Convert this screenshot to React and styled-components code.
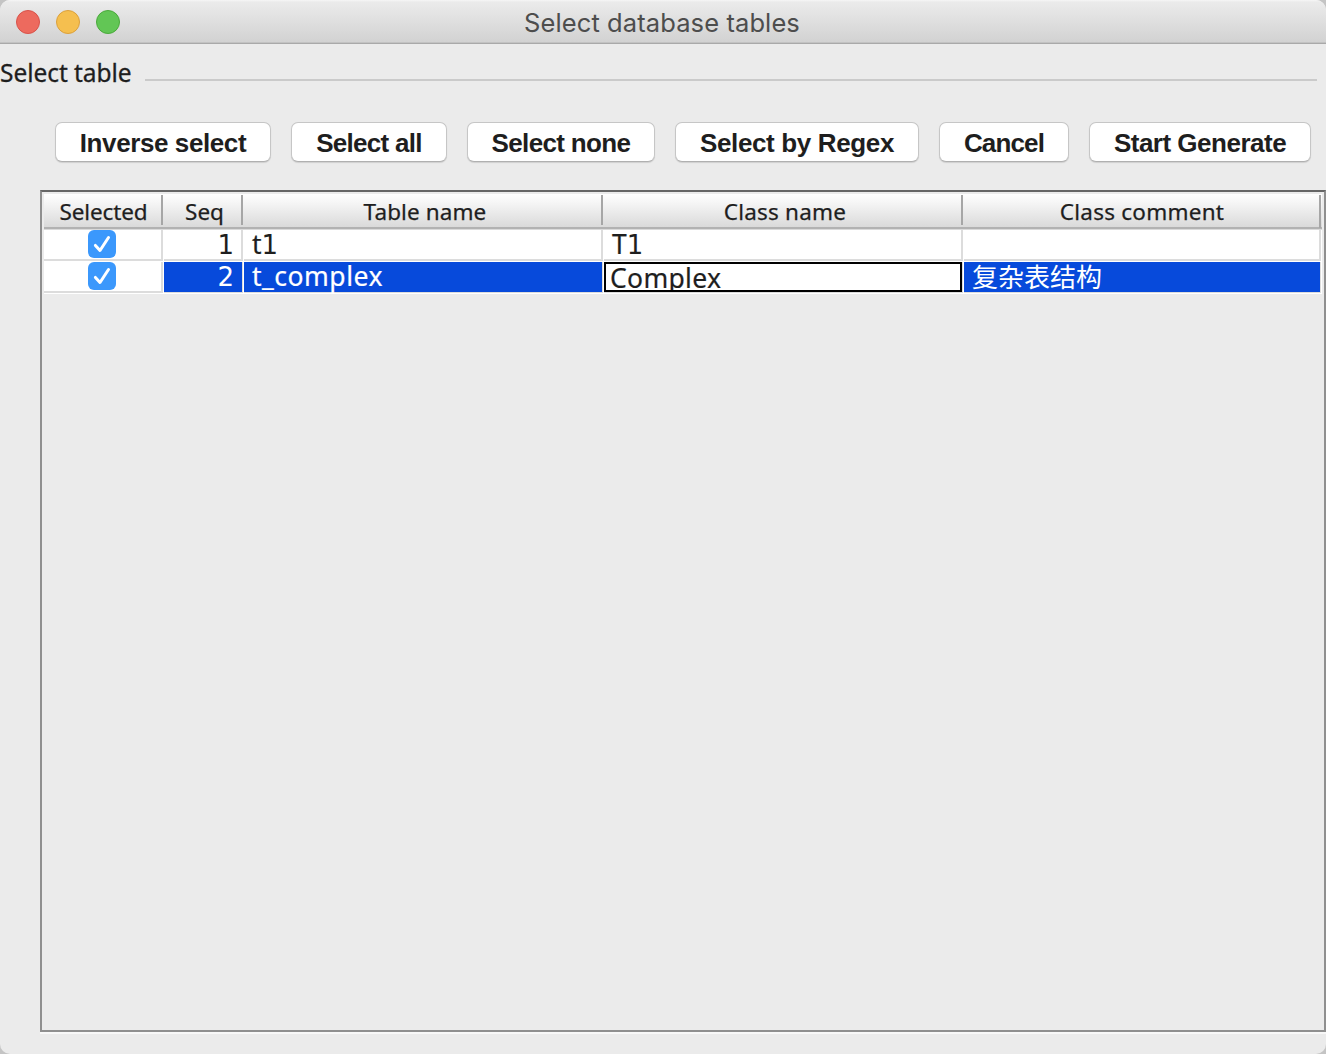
import React from "react";
import styled, { createGlobalStyle } from "styled-components";

const GlobalStyle = createGlobalStyle`
  * { box-sizing: border-box; }
  body { margin: 0; background: #c4c4c4; }
`;

const lucida = `"Lucida Grande", "Noto Sans", "Noto Sans CJK SC", sans-serif`;

const Window = styled.div`
  display: flex;
  flex-direction: column;
  width: 1326px;
  height: 1054px;
  overflow: hidden;
  border-radius: 10px;
  background: #ebebeb;
  color: #1e1e1e;
  font-family: ${lucida};
`;

const TitleBar = styled.header`
  display: grid;
  grid-template-columns: 1fr auto 1fr;
  align-items: center;
  flex: none;
  height: 44px;
  padding: 0 18px 0 16px;
  background: linear-gradient(#f6f6f6 0, #ebebeb 2px, #d2d2d2 42px);
  border-bottom: 1px solid #a9a9a9;
  box-shadow: inset 0 -1px #c2c2c2;
`;

const Lights = styled.div`
  display: flex;
  gap: 16px;
`;

const Light = styled.span`
  width: 24px;
  height: 24px;
  border-radius: 50%;
  background: ${(p) => p.$fill};
  border: 1px solid ${(p) => p.$edge};
`;

const Title = styled.h1`
  margin: 0;
  padding-top: 2px;
  font: 400 25.5px/30px Inter, sans-serif;
  letter-spacing: 0.1px;
  color: #4d4d4d;
  white-space: nowrap;
`;

const Section = styled.div`
  display: flex;
  align-items: center;
  flex: none;
  height: 60px;
  padding-right: 9px;
`;

const SectionLabel = styled.span`
  width: 145px;
  padding-bottom: 2px;
  font-size: 24.5px;
  line-height: 32px;
  letter-spacing: -0.05px;
  -webkit-text-stroke: 0.3px;
  white-space: nowrap;
`;

const Rule = styled.span`
  flex: 1;
  height: 2px;
  margin-top: 12px;
  background: #cacaca;
`;

const Toolbar = styled.div`
  display: flex;
  flex: none;
  gap: 20px;
  padding: 18px 15px 0 55px;
`;

const Button = styled.button`
  flex: none;
  width: ${(p) => p.$width}px;
  height: 40px;
  padding: 1px 0 0;
  border: 1px solid #c6c6c6;
  border-bottom-color: #b0b0b0;
  border-radius: 7px;
  background: #fff;
  box-shadow: 0 1px 1px rgba(0, 0, 0, 0.12);
  color: #1e1e1e;
  font: 700 26px/36px "Liberation Sans", Arial, sans-serif;
  letter-spacing: ${(p) => p.$track}px;
  white-space: nowrap;
`;

const ScrollPane = styled.div`
  flex: none;
  height: 842px;
  margin: 28px 0 0 40px;
  padding: 2px;
  border: 2px solid #8f8f8f;
  border-top-color: #666;
  box-shadow: 0 2px #f8f8f8;
`;

const columns = "120px 80px 360px 360px 358px";

const HeaderRow = styled.div`
  display: grid;
  grid-template-columns: ${columns};
  height: 36px;
  width: 1278px;
  padding-top: 1px;
  background: linear-gradient(#fff, #dadada 33px);
  border-bottom: 1px solid #dadada;
  box-shadow: inset 0 -2px #b2b2b2;
`;

const HeaderCell = styled.div`
  height: ${(p) => (p.$last ? 33 : 30)}px;
  margin-right: 1px;
  border-right: 2px solid #a6a6a6;
  font-size: 22.5px;
  line-height: 34px;
  -webkit-text-stroke: 0.25px;
  letter-spacing: ${(p) => p.$track}px;
  text-align: center;
  padding-left: ${(p) => p.$shift || 0}px;
  white-space: nowrap;
`;

const Row = styled.div`
  display: grid;
  grid-template-columns: ${columns};
  width: 1278px;
  height: 32px;
  background: #fff;
`;

const Cell = styled.div`
  height: 31px;
  margin-right: 1px;
  padding: 0 ${(p) => (p.$digits && !p.$selected ? 7 : 8)}px 0 8px;
  border: solid #dcdcdc;
  border-width: ${(p) => (p.$selected ? "0 1px 1px 0" : "0 2px 2px 0")};
  background: ${(p) => (p.$selected ? "#074adb" : "#fff")};
  color: ${(p) => (p.$selected ? "#fff" : "#1e1e1e")};
  font-family: ${(p) => (p.$digits ? `"DejaVu Sans", sans-serif` : lucida)};
  font-size: ${(p) => (p.$digits || p.$cjk ? 26 : 26.5)}px;
  line-height: ${(p) => (p.$digits || p.$cjk ? 30 : 28)}px;
  letter-spacing: ${(p) => p.$track || 0}px;
  text-align: ${(p) => (p.$digits ? "right" : "left")};
  -webkit-text-stroke: ${(p) => (p.$digits || p.$cjk ? 0 : 0.2)}px;
  white-space: nowrap;
`;

const CheckCell = styled(Cell)`
  display: flex;
  justify-content: center;
  align-items: flex-start;
  padding: 0 1px 0 0;
`;

const Checkbox = styled.span`
  display: flex;
  width: 28px;
  height: 28px;
  border-radius: 6px;
  background: #3b98fc;
`;

const EditorCell = styled(Cell)`
  padding: 0;
  border-width: 0 1px 1px 0;
`;

const Editor = styled.div`
  height: 30px;
  padding-left: 4px;
  overflow: hidden;
  border: 2px solid #000;
  line-height: 28px;
`;

const Digit = styled.span`
  font-family: "DejaVu Sans", sans-serif;
  font-size: 26px;
  line-height: 1;
  -webkit-text-stroke: 0;
`;

const Checked = () => (
  <Checkbox role="checkbox" aria-checked="true">
    <svg width="28" height="28" viewBox="0 0 28 28" fill="none">
      <path d="M7.4 15.4 12 20.5 20.5 7.5" stroke="#fff" strokeWidth="3" strokeLinecap="round" strokeLinejoin="round" />
    </svg>
  </Checkbox>
);

const lights = [
  ["#ed6a5e", "#d8524a"],
  ["#f5bf4f", "#dba03c"],
  ["#62c655", "#4aa93b"],
];

const actions = [
  ["Inverse select", 216, -0.4],
  ["Select all", 156, -0.7],
  ["Select none", 188, -0.65],
  ["Select by Regex", 244, -0.35],
  ["Cancel", 130, -0.85],
  ["Start Generate", 222, -0.5],
];

const headers = [
  ["Selected", -0.1, 2],
  ["Seq", 0, 4],
  ["Table name", 0.1, 5],
  ["Class name", 0.2, 5],
  ["Class comment", 0.25, 1],
];

export default function App() {
  return (
    <>
      <GlobalStyle />
      <Window>
        <TitleBar>
          <Lights>
            {lights.map(([fill, edge]) => (
              <Light key={fill} $fill={fill} $edge={edge} />
            ))}
          </Lights>
          <Title>Select database tables</Title>
        </TitleBar>
        <Section>
          <SectionLabel>Select table</SectionLabel>
          <Rule />
        </Section>
        <Toolbar>
          {actions.map(([label, width, track]) => (
            <Button key={label} $width={width} $track={track}>{label}</Button>
          ))}
        </Toolbar>
        <ScrollPane>
          <HeaderRow>
            {headers.map(([label, track, shift], i) => (
              <HeaderCell key={label} $track={track} $shift={shift} $last={i === 4}>{label}</HeaderCell>
            ))}
          </HeaderRow>
          <Row>
            <CheckCell><Checked /></CheckCell>
            <Cell $digits>1</Cell>
            <Cell>t<Digit>1</Digit></Cell>
            <Cell>T<Digit>1</Digit></Cell>
            <Cell />
          </Row>
          <Row>
            <CheckCell><Checked /></CheckCell>
            <Cell $selected $digits>2</Cell>
            <Cell $selected $track={0.5}>t_complex</Cell>
            <EditorCell $track={0.3}><Editor>Complex</Editor></EditorCell>
            <Cell $selected $cjk>复杂表结构</Cell>
          </Row>
        </ScrollPane>
      </Window>
    </>
  );
}
